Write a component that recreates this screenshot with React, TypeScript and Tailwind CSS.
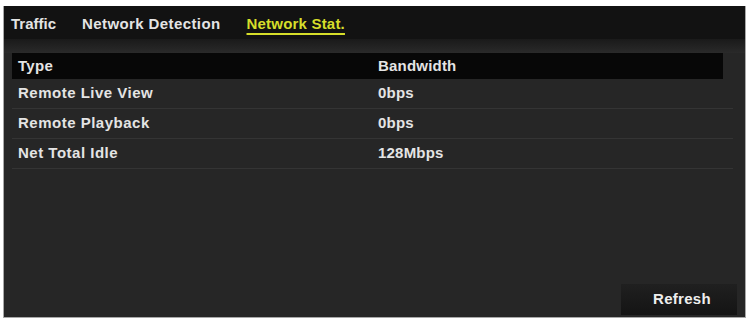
const rows = [
  { name: 'Remote Live View', value: '0bps' },
  { name: 'Remote Playback', value: '0bps' },
  { name: 'Net Total Idle', value: '128Mbps' },
];

export default function App() {
  return (
    <div className="w-[748px] h-[320px] bg-white pt-[6px] pl-[3px] font-['Liberation_Sans',Arial,sans-serif] font-bold text-[15px] text-[#e4e4e4]">
      <div className="w-[743px] h-[312px] border-l border-r border-b border-[#a8a8a8] bg-[#262626] flex flex-col">
        {/* tabs */}
        <div className="h-[33px] bg-[#121212] flex items-center pl-[7px] pt-[3px] gap-[26px]">
          <span>Traffic</span>
          <span className="tracking-[0.4px]">Network Detection</span>
          <span className="text-[#d6de2a] underline underline-offset-[4px] decoration-[1.5px] tracking-[0.2px]">
            Network Stat.
          </span>
        </div>
        <div className="h-[14px] bg-gradient-to-b from-[#1a1a1a] to-[#2a2a2a]" />

        <div className="flex-1 flex flex-col px-[8px]">
          <div className="h-[26px] bg-[#070707] flex items-center mr-[14px]">
            <span className="w-[366px] pl-[6px] tracking-[0.3px]">Type</span>
            <span className="tracking-[0.2px]">Bandwidth</span>
          </div>
          {rows.map((r) => (
            <div
              key={r.name}
              className="h-[30px] flex items-center border-b border-[#343434] mr-[4px]"
            >
              <span className="w-[366px] pl-[6px] tracking-[0.5px]">{r.name}</span>
              <span className="tracking-[0.2px]">{r.value}</span>
            </div>
          ))}
          <div className="flex-1" />
          <div className="flex justify-end mb-[2px]">
            <button className="w-[116px] h-[31px] bg-gradient-to-b from-[#202020] to-[#141414] text-[#eeeeee] font-bold text-[15px] pl-[6px] tracking-[0.3px]">
              Refresh
            </button>
          </div>
        </div>
      </div>
    </div>
  );
}
